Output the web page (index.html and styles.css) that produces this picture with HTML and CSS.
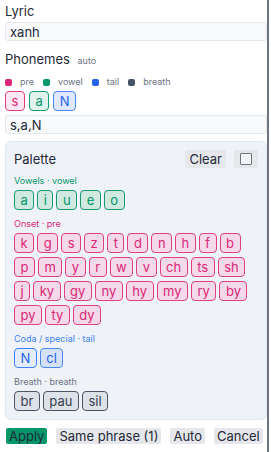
FILE: index.html
```html
<!DOCTYPE html>
<html>
<head>
  <meta charset="UTF-8">
  <link rel="stylesheet" href="styles.css">
</head>
<body>
  <div class="editor">
    <label class="field-label">Lyric</label>
    <input class="text-input" type="text" value="xanh">

    <div class="field-label phonemes-label">Phonemes <span class="hint">auto</span></div>
    <div class="legend">
      <span class="legend-item"><span class="dot pre"></span>pre</span>
      <span class="legend-item"><span class="dot vowel"></span>vowel</span>
      <span class="legend-item"><span class="dot tail"></span>tail</span>
      <span class="legend-item"><span class="dot breath"></span>breath</span>
    </div>

    <div class="sequence">
      <span class="chip seq pre">s</span>
      <span class="chip seq vowel">a</span>
      <span class="chip seq tail">N</span>
    </div>
    <input class="text-input" type="text" value="s,a,N">

    <div class="palette">
      <div class="palette-header">
        <span class="palette-title">Palette</span>
        <button class="small-button">Clear</button>
        <button class="small-button toggle"><span class="box"></span></button>
      </div>

      <div class="palette-group">
        <div class="group-label vowel">Vowels · vowel</div>
        <div class="chip-list">
          <span class="chip vowel">a</span>
          <span class="chip vowel">i</span>
          <span class="chip vowel">u</span>
          <span class="chip vowel">e</span>
          <span class="chip vowel">o</span>
        </div>
      </div>

      <div class="palette-group">
        <div class="group-label pre">Onset · pre</div>
        <div class="chip-list">
          <span class="chip pre">k</span>
          <span class="chip pre">g</span>
          <span class="chip pre">s</span>
          <span class="chip pre">z</span>
          <span class="chip pre">t</span>
          <span class="chip pre">d</span>
          <span class="chip pre">n</span>
          <span class="chip pre">h</span>
          <span class="chip pre">f</span>
          <span class="chip pre">b</span>
          <span class="chip pre">p</span>
          <span class="chip pre">m</span>
          <span class="chip pre">y</span>
          <span class="chip pre">r</span>
          <span class="chip pre">w</span>
          <span class="chip pre">v</span>
          <span class="chip pre">ch</span>
          <span class="chip pre">ts</span>
          <span class="chip pre">sh</span>
          <span class="chip pre">j</span>
          <span class="chip pre">ky</span>
          <span class="chip pre">gy</span>
          <span class="chip pre">ny</span>
          <span class="chip pre">hy</span>
          <span class="chip pre">my</span>
          <span class="chip pre">ry</span>
          <span class="chip pre">by</span>
          <span class="chip pre">py</span>
          <span class="chip pre">ty</span>
          <span class="chip pre">dy</span>
        </div>
      </div>

      <div class="palette-group">
        <div class="group-label tail">Coda / special · tail</div>
        <div class="chip-list">
          <span class="chip tail current">N</span>
          <span class="chip tail">cl</span>
        </div>
      </div>

      <div class="palette-group">
        <div class="group-label breath">Breath · breath</div>
        <div class="chip-list">
          <span class="chip breath">br</span>
          <span class="chip breath">pau</span>
          <span class="chip breath">sil</span>
        </div>
      </div>
    </div>

    <div class="actions">
      <button class="button button-apply">Apply</button>
      <button class="button">Same phrase (1)</button>
      <button class="button">Auto</button>
      <button class="button">Cancel</button>
    </div>
  </div>
</body>
</html>
```

FILE: styles.css
```css
body {
  margin: 0;
  background: #ffffff;
  font-family: Inter, "Noto Sans", sans-serif;
  color: #1f2937;
}

.editor {
  width: 262px;
  height: 452px;
  padding-left: 5px;
  border-right: 2px solid #6e7480;
  overflow: hidden;
  box-sizing: content-box;
}

.field-label {
  display: block;
  font-size: 13px;
  line-height: 16px;
  margin-top: 3px;
  margin-bottom: 3px;
}

.phonemes-label {
  margin-top: 10px;
  margin-bottom: 0;
}

.hint {
  font-size: 9px;
  color: #6b7280;
  margin-left: 4px;
}

.text-input {
  display: block;
  width: 100%;
  height: 19px;
  box-sizing: border-box;
  margin: 0;
  padding: 0 4px;
  border: 1px solid #e2e8f0;
  border-radius: 3px;
  background: #f8fafc;
  font-family: inherit;
  font-size: 13px;
  color: #1f2937;
}

.legend {
  display: flex;
  gap: 9px;
  margin-top: 7px;
  font-size: 9px;
  line-height: 12px;
  color: #6b7280;
}

.legend-item {
  display: flex;
  align-items: center;
}

.dot {
  width: 7px;
  height: 7px;
  border-radius: 2px;
  margin-right: 8px;
}

.dot.pre { background: #db2777; }
.dot.vowel { background: #059669; }
.dot.tail { background: #2563eb; }
.dot.breath { background: #475569; }

.sequence {
  display: flex;
  gap: 4px;
  margin-top: 3px;
  margin-bottom: 4px;
}

.chip {
  display: inline-flex;
  align-items: center;
  justify-content: center;
  height: 20px;
  box-sizing: border-box;
  padding: 0 5.5px;
  border: 1px solid;
  border-radius: 4px;
  font-size: 13px;
}

.chip.seq {
  min-width: 20px;
}

.chip.pre {
  color: #db2777;
  border-color: #e0407f;
  background: #f3d9e9;
}

.chip.vowel {
  color: #059669;
  border-color: #179a6e;
  background: #cfe8e0;
}

.chip.tail {
  color: #2563eb;
  border-color: #4d86ee;
  background: #d5e1f7;
}

.chip.tail.current {
  border-color: #3b82f6;
  background: #e4ecfb;
}

.chip.breath {
  color: #374151;
  border-color: #4b5563;
  background: #dde1e8;
}

.chip.seq.pre { background: #fce7f3; }
.chip.seq.vowel { background: #e1f3ed; }
.chip.seq.tail { background: #dfe8fc; }

.palette {
  margin-top: 7px;
  padding: 8px;
  border: 1px solid #e2e8f0;
  border-radius: 6px;
  background: #eff3f8;
}

.palette-header {
  display: flex;
  align-items: center;
  gap: 8px;
  height: 18px;
}

.palette-title {
  flex: 1;
  font-size: 13px;
  color: #1f2937;
}

.small-button {
  height: 18px;
  padding: 0 4px;
  border: none;
  border-radius: 2px;
  background: #e5e7eb;
  font-family: inherit;
  font-size: 13px;
  color: #1f2937;
}

.small-button.toggle {
  width: 24px;
  display: flex;
  align-items: center;
  justify-content: center;
}

.box {
  width: 10px;
  height: 10px;
  border: 1px solid #6b7280;
  border-radius: 1px;
  background: #f3f4f6;
}

.palette-group {
  margin-top: 7px;
}

.palette-group + .palette-group {
  margin-top: 8px;
}

.group-label {
  font-size: 9px;
  line-height: 12px;
  margin-bottom: 3px;
}

.group-label.vowel { color: #059669; }
.group-label.pre { color: #db2777; }
.group-label.tail { color: #3b82f6; }
.group-label.breath { color: #6b7280; }

.chip-list {
  display: flex;
  flex-wrap: wrap;
  gap: 4px 3px;
}

.actions {
  display: flex;
  gap: 9px;
  margin-top: 8px;
  padding-left: 1px;
}

.button {
  height: 16px;
  padding: 0 3px;
  border: none;
  border-radius: 2px;
  background: #e5e7eb;
  font-family: inherit;
  font-size: 13px;
  line-height: 16px;
  color: #1f2937;
  white-space: nowrap;
}

.button-apply {
  background: #059669;
}
```
